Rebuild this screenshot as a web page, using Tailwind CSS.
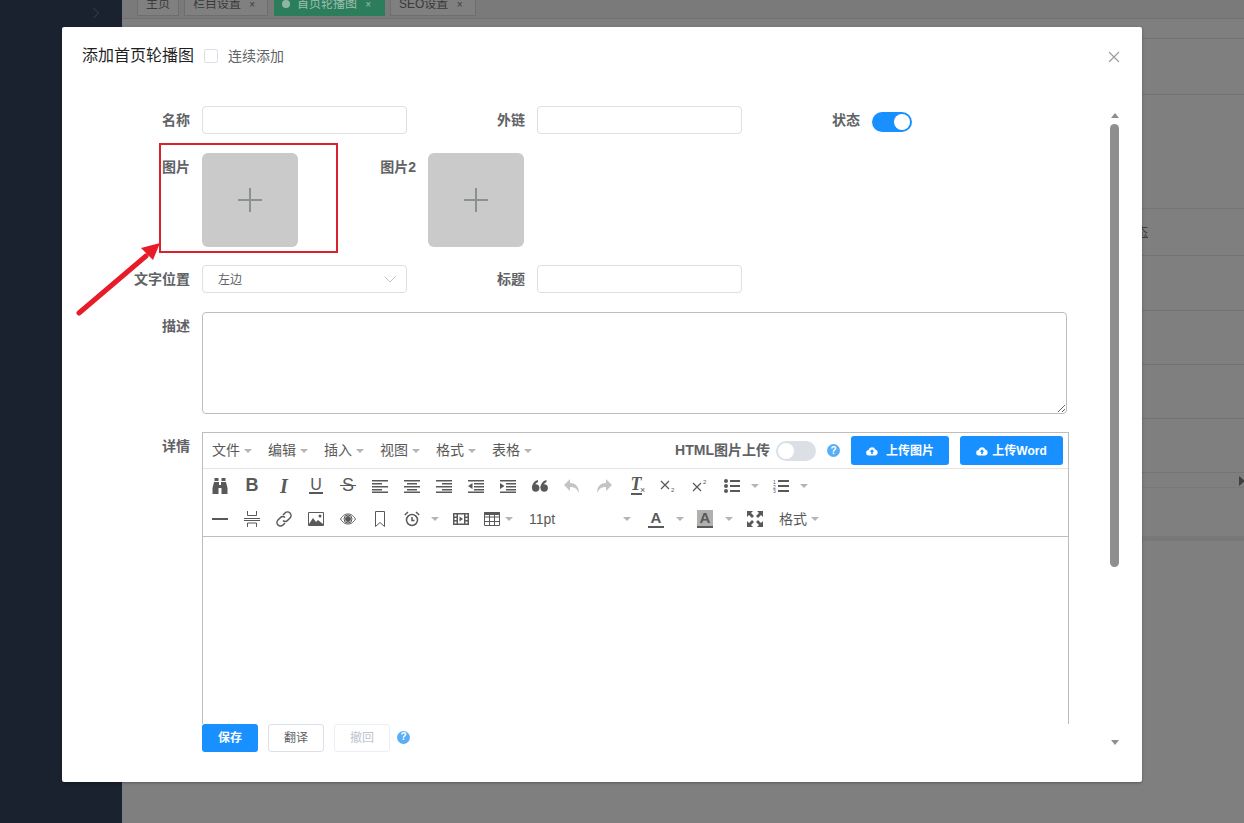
<!DOCTYPE html>
<html lang="zh-CN">
<head>
    <meta charset="UTF-8">
    <title>添加首页轮播图</title>
    <script src="https://cdn.jsdelivr.net/npm/@tailwindcss/browser@4"></script>
</head>
<body class="relative h-[823px] w-[1244px] overflow-hidden bg-[#7f7f7f] font-['Liberation_Sans','Noto_Sans_CJK_SC',sans-serif] text-[14px]">
    <!-- page behind the dialog -->
    <div class="flex h-full">
        <aside class="w-[122px] shrink-0 bg-[#1a2230]">
            <svg class="ml-[92px] mt-[7px]" width="8" height="12" viewBox="0 0 8 12" fill="none" stroke="#3a4352"><path d="M1.5 1l5 5-5 5"/></svg>
        </aside>
        <main class="relative flex-1">
            <div class="flex h-[19px] items-end gap-[5px] border-b border-[#717171] bg-[#7a7a7a] pl-[15px] text-[12px] leading-[16px] text-[#3a3a3a]">
                <div class="mb-[2px] h-[30px] w-[42px] shrink-0 border border-[#6e6e6e] bg-[#808080] pt-[9px] text-center">主页</div>
                <div class="mb-[2px] h-[30px] w-[84px] shrink-0 border border-[#6e6e6e] bg-[#808080] pl-[8px] pt-[9px]">栏目设置 <span class="ml-[5px] text-[10px]">×</span></div>
                <div class="ml-[1px] mb-[2px] h-[30px] w-[111px] shrink-0 bg-[#2b7d5c] pl-[8px] pt-[10px] text-[#9dbfb0]"><span class="mr-[7px] inline-block size-[8px] rounded-full bg-[#8fb5a5]"></span>首页轮播图 <span class="ml-[5px] text-[10px]">×</span></div>
                <div class="mb-[2px] h-[30px] w-[86px] shrink-0 border border-[#6e6e6e] bg-[#808080] pl-[8px] pt-[9px]">SEO设置 <span class="ml-[5px] text-[10px]">×</span></div>
            </div>
            <div class="h-[20px] border-b border-[#737373]"></div>
            <div class="h-[56px] border-b border-[#737373]"></div>
            <div class="h-[114px] border-b border-[#757575]"></div>
            <div class="h-[47px] border-b border-[#737373] pl-[1000px] pt-[13px] text-[13px] text-[#3f3f3f] underline">状态</div>
            <div class="h-[55px] border-b border-[#737373]"></div>
            <div class="h-[54px] border-b border-[#737373]"></div>
            <div class="h-[54px] border-b border-[#737373]"></div>
            <div class="h-[54px] border-b border-[#747474]"></div>
            <div class="relative h-[15px] border-b border-[#787878]"><span class="absolute right-[-1px] top-[3px] size-0 border-y-[5px] border-l-[6px] border-y-transparent border-l-[#3f3f3f]"></span></div>
            <div class="h-[48px]"></div>
            <div class="h-[5px] bg-[#787878]"></div>
        </main>
    </div>

    <!-- dialog -->
    <div class="absolute left-[62px] top-[27px] flex h-[755px] w-[1080px] flex-col rounded-[2px] bg-white shadow-[0_1px_3px_rgba(0,0,0,0.3)]">
        <header class="flex h-[58px] shrink-0 items-center pl-[20px] pr-[22px]">
            <h2 class="text-[16px] leading-[24px] text-[#1f1f1f]">添加首页轮播图</h2>
            <span class="ml-[10px] size-[14px] rounded-[2px] border border-[#dcdfe6]"></span>
            <span class="ml-[10px] text-[14px] text-[#606266]">连续添加</span>
            <svg class="ml-auto mt-[2px]" width="12" height="12" viewBox="0 0 12 12" stroke="#999" stroke-width="1.1"><path d="M1 1l10 10M11 1L1 11"/></svg>
        </header>
        <div class="flex min-h-0 flex-1 pt-[21px]">
            <div class="w-[1048px] shrink-0 pl-[60px]">
                <div class="h-[618px] overflow-hidden">
                    <!-- row 1 -->
                    <div class="flex h-[28px] items-start font-bold text-[#606266]">
                        <label class="w-[68px] text-right leading-[28px]">名称</label>
                        <input class="ml-[12px] h-[28px] w-[205px] rounded-[4px] border border-[#dcdfe6]">
                        <label class="w-[118px] text-right leading-[28px]">外链</label>
                        <input class="ml-[12px] h-[28px] w-[205px] rounded-[4px] border border-[#dcdfe6]">
                        <label class="w-[118px] text-right leading-[28px]">状态</label>
                        <span class="ml-[12px] mt-[6px] flex h-[20px] w-[40px] items-center justify-end rounded-full bg-[#1890ff] pr-[2px]"><span class="size-[16px] rounded-full bg-white"></span></span>
                    </div>
                    <!-- row 2 -->
                    <div class="mt-[19px] flex h-[94px] items-start font-bold text-[#606266]">
                        <label class="w-[68px] text-right leading-[28px]">图片</label>
                        <div class="ml-[12px] flex h-[94px] w-[96px] items-center justify-center rounded-[6px] bg-[#cacaca]">
                            <svg width="24" height="24" viewBox="0 0 24 24" stroke="#8b9090" stroke-width="2"><path d="M0 12h24M12 0v24"/></svg>
                        </div>
                        <label class="w-[118px] text-right leading-[28px]">图片2</label>
                        <div class="ml-[12px] flex h-[94px] w-[96px] items-center justify-center rounded-[6px] bg-[#cacaca]">
                            <svg width="24" height="24" viewBox="0 0 24 24" stroke="#8b9090" stroke-width="2"><path d="M0 12h24M12 0v24"/></svg>
                        </div>
                    </div>
                    <!-- row 3 -->
                    <div class="mt-[18px] flex h-[28px] items-start font-bold text-[#606266]">
                        <label class="w-[68px] text-right leading-[28px]">文字位置</label>
                        <div class="ml-[12px] flex h-[28px] w-[205px] items-center justify-between rounded-[4px] border border-[#dcdfe6] pl-[15px] pr-[10px] pt-[1px] text-[12px] font-normal">
                            左边
                            <svg width="12" height="7" viewBox="0 0 12 7" fill="none" stroke="#c0c4cc"><path d="M.5.5L6 6 11.5.5"/></svg>
                        </div>
                        <label class="w-[118px] text-right leading-[28px]">标题</label>
                        <input class="ml-[12px] h-[28px] w-[205px] rounded-[4px] border border-[#dcdfe6]">
                    </div>
                    <!-- row 4 -->
                    <div class="mt-[19px] flex items-start font-bold text-[#606266]">
                        <label class="w-[68px] text-right leading-[28px]">描述</label>
                        <textarea class="ml-[12px] block h-[102px] w-[865px] rounded-[4px] border border-[#bdbdbd]"></textarea>
                    </div>
                    <!-- row 5: editor -->
                    <div class="mt-[18px] flex items-start">
                        <label class="w-[68px] text-right font-bold leading-[28px] text-[#606266]">详情</label>
                        <div class="ml-[12px] h-[400px] w-[867px] border border-[#bdbdbd] text-[#595959]">
                            <div class="flex h-[36px] items-center border-b border-[#e4e4e4] pl-[9px]">
                                <span class="flex w-[56px] items-center gap-[4px]">文件<i class="size-0 border-x-[4px] border-t-[4px] border-x-transparent border-t-[#b5b5b5]"></i></span>
                                <span class="flex w-[56px] items-center gap-[4px]">编辑<i class="size-0 border-x-[4px] border-t-[4px] border-x-transparent border-t-[#b5b5b5]"></i></span>
                                <span class="flex w-[56px] items-center gap-[4px]">插入<i class="size-0 border-x-[4px] border-t-[4px] border-x-transparent border-t-[#b5b5b5]"></i></span>
                                <span class="flex w-[56px] items-center gap-[4px]">视图<i class="size-0 border-x-[4px] border-t-[4px] border-x-transparent border-t-[#b5b5b5]"></i></span>
                                <span class="flex w-[56px] items-center gap-[4px]">格式<i class="size-0 border-x-[4px] border-t-[4px] border-x-transparent border-t-[#b5b5b5]"></i></span>
                                <span class="flex w-[56px] items-center gap-[4px]">表格<i class="size-0 border-x-[4px] border-t-[4px] border-x-transparent border-t-[#b5b5b5]"></i></span>
                                <span class="ml-auto font-bold text-[#606266]">HTML图片上传</span>
                                <span class="ml-[6px] flex h-[20px] w-[40px] items-center rounded-full bg-[#dcdfe6] pl-[2px]"><span class="size-[16px] rounded-full bg-white"></span></span>
                                <span class="ml-[11px] flex size-[13px] items-center justify-center rounded-full bg-[#5aaef5] text-[10px] font-bold leading-none text-white">?</span>
                                <span class="ml-[11px] flex h-[29px] w-[98px] items-center justify-center gap-[8px] rounded-[3px] bg-[#1890ff] text-[12px] font-bold text-white">
                                    <svg width="12" height="10" viewBox="0 0 12 10"><path fill="#fff" d="M3 9.500A2.700 2.700 0 0 1 2.600 4.100 3.500 3.500 0 0 1 9.300 3.600 3 3 0 0 1 9.200 9.500z"/><path fill="#1890ff" d="M6 3.200L8.300 5.800H6.800V8H5.200V5.800H3.700z"/></svg>上传图片</span>
                                <span class="ml-[11px] mr-[5px] flex h-[29px] w-[103px] items-center justify-center gap-[4px] rounded-[3px] bg-[#1890ff] text-[12px] font-bold text-white">
                                    <svg width="12" height="10" viewBox="0 0 12 10"><path fill="#fff" d="M3 9.500A2.700 2.700 0 0 1 2.600 4.100 3.500 3.500 0 0 1 9.300 3.600 3 3 0 0 1 9.200 9.500z"/><path fill="#1890ff" d="M6 3.200L8.300 5.800H6.800V8H5.200V5.800H3.700z"/></svg>上传Word</span>
                            </div>
                            <!-- toolbar row 1 -->
                            <div class="flex h-[33px] items-center pl-[1px] [&>span]:flex [&>span]:h-[24px] [&>span]:w-[32px] [&>span]:items-center [&>span]:justify-center">
                                <span><svg width="16" height="16" viewBox="0 0 16 16" fill="#595959"><path d="M2.500 0h4v3h-4zM9.500 0h4v3h-4zM2 4h5v3h2V4h5l1.500 6v6H9.500v-6h-3v6H.5v-6z"/></svg></span>
                                <span class="text-[18px] font-bold">B</span>
                                <span class="font-['Liberation_Serif'] text-[20px] font-bold italic">I</span>
                                <span><span class="border-b-[2px] border-[#595959] px-[1px] text-[16px] leading-[15px]">U</span></span>
                                <span class="relative text-[18px]">S<i class="absolute left-[8px] right-[8px] top-[11px] h-[1.5px] bg-[#595959]"></i></span>
                                <span><svg width="16" height="14" viewBox="0 0 16 14" fill="#595959"><path d="M0 1h16v1.500H0zM0 4h10v1.500H0zM0 7h16v1.500H0zM0 10h10v1.500H0zM0 12.500h16V14H0z"/></svg></span>
                                <span><svg width="16" height="14" viewBox="0 0 16 14" fill="#595959"><path d="M0 1h16v1.500H0zM3 4h10v1.500H3zM0 7h16v1.500H0zM3 10h10v1.500H3zM0 12.500h16V14H0z"/></svg></span>
                                <span><svg width="16" height="14" viewBox="0 0 16 14" fill="#595959"><path d="M0 1h16v1.500H0zM6 4h10v1.500H6zM0 7h16v1.500H0zM6 10h10v1.500H6zM0 12.500h16V14H0z"/></svg></span>
                                <span><svg width="16" height="14" viewBox="0 0 16 14" fill="#595959"><path d="M0 1h16v1.500H0zM6 4h10v1.500H6zM6 7h10v1.500H6zM6 10h10v1.500H6zM0 12.500h16V14H0zM4.500 4v6L0 7z"/></svg></span>
                                <span><svg width="16" height="14" viewBox="0 0 16 14" fill="#595959"><path d="M0 1h16v1.500H0zM6 4h10v1.500H6zM6 7h10v1.500H6zM6 10h10v1.500H6zM0 12.500h16V14H0zM0 4v6l4.500-3z"/></svg></span>
                                <span><svg width="16" height="12" viewBox="0 0 16 12" fill="#595959"><circle cx="3.700" cy="8" r="3.700"/><circle cx="12.200" cy="8" r="3.700"/><path d="M0 8C0 4 2 1 6 0v2C3.500 3 2.500 5 2.500 8zM8.500 8c0-4 2-7 6-8v2c-2.500 1-3.500 3-3.500 6z"/></svg></span>
                                <span><svg width="16" height="14" viewBox="0 0 16 14" fill="#c4c4c4"><path d="M6 0v4c5 0 9 3 9 10-2-4-4-6-9-6v4L0 6z"/></svg></span>
                                <span><svg width="16" height="14" viewBox="0 0 16 14" fill="#c4c4c4"><path d="M10 0v4C5 4 1 7 1 14c2-4 4-6 9-6v4l6-6z"/></svg></span>
                                <span class="relative"><span class="border-b-[2px] border-[#595959] font-['Liberation_Serif'] text-[18px] font-bold italic leading-[17px]">T</span><span class="absolute left-[20px] top-[10px] text-[9px]">×</span></span>
                                <span><svg width="16" height="14" viewBox="0 0 16 14" fill="none" stroke="#595959" stroke-width="1.200"><path d="M1 2l8 8M9 2l-8 8"/><text x="11" y="13" font-size="6" fill="#595959" stroke="none" font-family="Liberation Sans">2</text></svg></span>
                                <span><svg width="16" height="14" viewBox="0 0 16 14" fill="none" stroke="#595959" stroke-width="1.200"><path d="M1 4l8 8M9 4l-8 8"/><text x="11" y="5" font-size="6" fill="#595959" stroke="none" font-family="Liberation Sans">2</text></svg></span>
                                <span><svg width="16" height="14" viewBox="0 0 16 14" fill="#595959"><circle cx="2" cy="2" r="2"/><circle cx="2" cy="7" r="2"/><circle cx="2" cy="12" r="2"/><path d="M6 1h10v2H6zM6 6h10v2H6zM6 11h10v2H6z"/></svg></span>
                                <i class="ml-[3px] size-0 border-x-[4px] border-t-[4px] border-x-transparent border-t-[#b5b5b5]"></i>
                                <span class="ml-[10px] !w-[24px]"><svg width="16" height="14" viewBox="0 0 16 14" fill="#595959"><text x="0" y="4.500" font-size="5" font-family="Liberation Sans">1</text><text x="0" y="9.500" font-size="5" font-family="Liberation Sans">2</text><text x="0" y="14" font-size="5" font-family="Liberation Sans">3</text><path d="M5 1h11v2H5zM5 6h11v2H5zM5 11h11v2H5z"/></svg></span>
                                <i class="ml-[7px] size-0 border-x-[4px] border-t-[4px] border-x-transparent border-t-[#b5b5b5]"></i>
                            </div>
                            <!-- toolbar row 2 -->
                            <div class="flex h-[35px] items-center border-b border-[#bdbdbd] pl-[1px] [&>span]:flex [&>span]:h-[24px] [&>span]:w-[32px] [&>span]:items-center [&>span]:justify-center">
                                <span><svg width="16" height="2" viewBox="0 0 16 2" fill="#595959"><path d="M0 0h16v2H0z"/></svg></span>
                                <span><svg width="16" height="16" viewBox="0 0 16 16" fill="none" stroke="#595959"><path d="M3.500 0v4.500h9V0M0 7.500h16M0 9.500h16M3.500 16v-4h9v4"/></svg></span>
                                <span><svg width="16" height="16" viewBox="0 0 16 16" fill="none" stroke="#595959" stroke-width="1.500"><path d="M7 4l2-2a3 3 0 0 1 5 5l-2.500 2.500a3 3 0 0 1-4.500 0"/><path d="M9 12l-2 2a3 3 0 0 1-5-5l2.500-2.500a3 3 0 0 1 4.500 0"/></svg></span>
                                <span><svg width="16" height="14" viewBox="0 0 16 14"><path fill="none" stroke="#595959" d="M.5.500h15v13H.5z"/><path fill="#595959" d="M1 12l4-6 3 4 2-2 5 4v1H1z"/><circle cx="12" cy="4" r="1.500" fill="#595959"/></svg></span>
                                <span><svg width="16" height="12" viewBox="0 0 16 12" fill="none" stroke="#595959"><path d="M.5 6C3 2 5.500 1 8 1s5 1 7.500 5C13 10 10.500 11 8 11S3 10 .5 6z"/><circle cx="8" cy="6" r="2.500" fill="#595959"/><circle cx="8" cy="6" r="4"/></svg></span>
                                <span><svg width="12" height="16" viewBox="0 0 12 16" fill="none" stroke="#595959"><path d="M1.500.5h9v15L6 11.500 1.500 15.500z"/></svg></span>
                                <span><svg width="16" height="16" viewBox="0 0 16 16" fill="none" stroke="#595959" stroke-width="1.500"><circle cx="8" cy="9" r="5.500"/><path d="M8 6v3.500h2.500M.8 4L4 1M15.200 4L12 1"/></svg></span>
                                <i class="ml-[3px] size-0 border-x-[4px] border-t-[4px] border-x-transparent border-t-[#b5b5b5]"></i>
                                <span class="ml-[14px] !w-[16px]"><svg width="16" height="12" viewBox="0 0 16 12"><path fill="#595959" fill-rule="evenodd" d="M0 0h16v12H0zM1.500 1.500v2h2v-2zM1.500 5v2h2V5zM1.500 8.500v2h2v-2zM12.500 1.500v2h2v-2zM12.500 5v2h2V5zM12.500 8.500v2h2v-2zM5 1.500v9h6v-9z"/><path fill="#595959" d="M6.500 3.500L10 6l-3.500 2.500z"/></svg></span>
                                <span class="ml-[15px] !w-[16px]"><svg width="16" height="14" viewBox="0 0 16 14" fill="none" stroke="#595959"><path d="M.5.500h15v13H.5zM.5 5h15M.5 9.500h15M5.500.5v13M10.500.5v13"/><path d="M.5.500h15v2H.5z" fill="#595959"/></svg></span>
                                <i class="ml-[5px] size-0 border-x-[4px] border-t-[4px] border-x-transparent border-t-[#b5b5b5]"></i>
                                <span class="ml-[16px] !w-[94px] !justify-start">11pt</span>
                                <i class="size-0 border-x-[4px] border-t-[4px] border-x-transparent border-t-[#b5b5b5]"></i>
                                <span class="ml-[14px] !w-[22px]"><span class="border-b-[2px] border-[#595959] px-[3px] text-[15px] font-bold leading-[16px]">A</span></span>
                                <i class="ml-[9px] size-0 border-x-[4px] border-t-[4px] border-x-transparent border-t-[#b5b5b5]"></i>
                                <span class="ml-[10px] !w-[22px]"><span class="border-b-[2px] border-[#595959] bg-[#b0b0b0] px-[3px] text-[15px] font-bold leading-[16px]">A</span></span>
                                <i class="ml-[9px] size-0 border-x-[4px] border-t-[4px] border-x-transparent border-t-[#b5b5b5]"></i>
                                <span class="ml-[6px] !w-[32px]"><svg width="16" height="16" viewBox="0 0 16 16" fill="#595959"><path d="M0 0h6L4 2l3 3-2 2-3-3-2 2zM16 0v6l-2-2-3 3-2-2 3-3-2-2zM0 16v-6l2 2 3-3 2 2-3 3 2 2zM16 16h-6l2-2-3-3 2-2 3 3 2-2z"/></svg></span>
                                <span class="ml-[8px] !w-auto gap-[4px]">格式<i class="size-0 border-x-[4px] border-t-[4px] border-x-transparent border-t-[#b5b5b5]"></i></span>
                            </div>
                        </div>
                    </div>
                </div>
                <!-- footer buttons -->
                <div class="flex h-[28px] items-center pl-[80px] text-[12px]">
                    <button class="h-[28px] w-[56px] rounded-[3px] bg-[#1890ff] font-bold text-white">保存</button>
                    <button class="ml-[10px] h-[28px] w-[56px] rounded-[3px] border border-[#dcdfe6] text-[#606266]">翻译</button>
                    <button class="ml-[10px] h-[28px] w-[56px] rounded-[3px] border border-[#ebeef5] text-[#c0c4cc]">撤回</button>
                    <span class="mb-[2px] ml-[7px] flex size-[13px] items-center justify-center rounded-full bg-[#5aaef5] text-[10px] font-bold leading-none text-white">?</span>
                </div>
            </div>
            <!-- scrollbar -->
            <div class="mt-[7px] flex h-[632px] w-[9px] shrink-0 flex-col items-center">
                <span class="size-0 border-x-[4.5px] border-b-[5px] border-x-transparent border-b-[#8f8f8f]"></span>
                <span class="mt-[6px] h-[443px] w-[9px] rounded-full bg-[#8f8f8f]"></span>
                <span class="mt-auto size-0 border-x-[4.5px] border-t-[5px] border-x-transparent border-t-[#8f8f8f]"></span>
            </div>
        </div>
    </div>

    <!-- red annotation over the screenshot -->
    <div class="absolute left-[159px] top-[143px] h-[110px] w-[179px] border-2 border-[#d8232e]"></div>
    <svg class="absolute left-[70px] top-[235px]" width="100" height="90" viewBox="0 0 100 90">
        <path d="M9 78L76 21" stroke="#e81c28" stroke-width="5" stroke-linecap="round" fill="none"/>
        <path d="M90 8L71 13 83 25z" fill="#e81c28"/>
    </svg>
</body>
</html>
